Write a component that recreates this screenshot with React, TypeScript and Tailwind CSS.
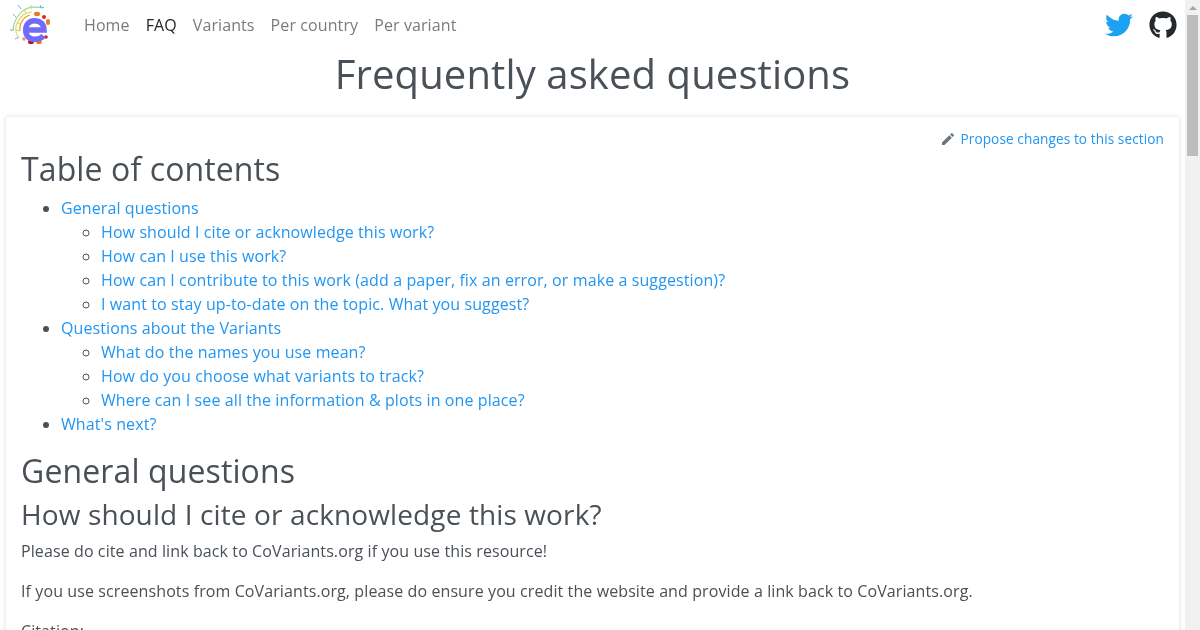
import { FaGithub, FaTwitter } from "react-icons/fa";
import { MdEdit } from "react-icons/md";

const nav = ["Home", "FAQ", "Variants", "Per country", "Per variant"];

const toc: { title: string; items: string[] }[] = [
  {
    title: "General questions",
    items: [
      "How should I cite or acknowledge this work?",
      "How can I use this work?",
      "How can I contribute to this work (add a paper, fix an error, or make a suggestion)?",
      "I want to stay up-to-date on the topic. What you suggest?",
    ],
  },
  {
    title: "Questions about the Variants",
    items: [
      "What do the names you use mean?",
      "How do you choose what variants to track?",
      "Where can I see all the information & plots in one place?",
    ],
  },
  { title: "What's next?", items: [] },
];

function Logo() {
  return (
    <svg width="42" height="42" viewBox="0 0 42 42" fill="none">
      <path d="M4 26 C5 15 12 4 24 3 C28 3 31 3 34 4" stroke="#8ad89a" strokeWidth="1.1" />
      <path d="M9 33 C5 26 7 18 14 11 C17 9 20 8 23 8" stroke="#f2d14a" strokeWidth="1.1" />
      <path d="M11 27 C10 20 14 13 21 11" stroke="#f39a3c" strokeWidth="1.2" />
      <path d="M1 26 h4 M4 10 l3 3 M9 1 l3 4 M32 1 l-1 3 M35 3 l-3 1 M6 35 l4 -2" stroke="#6fa8e6" strokeWidth="1" />
      <path d="M8 18 l3 2 M15 5 l2 4 M22 1 l0 4 M7 26 l4 1" stroke="#b5d96a" strokeWidth="1" />
      <ellipse cx="28" cy="10" rx="3" ry="2.2" fill="#e8791c" />
      <ellipse cx="39" cy="18" rx="2" ry="3" fill="#e8791c" />
      <circle cx="35" cy="13" r="2" fill="#d9252a" />
      <circle cx="37" cy="33" r="1.8" fill="#c9202a" />
      <ellipse cx="30" cy="38" rx="2.8" ry="2" fill="#e8791c" />
      <ellipse cx="22" cy="38" rx="3" ry="2" fill="#b80f1a" />
      <circle cx="15" cy="35" r="1.8" fill="#ef9a66" />
      <path
        d="M17 26 H35 C35 20 31 16.7 25.5 16.7 C20 16.7 16.7 20.5 16.7 26 C16.7 32 20.5 35.3 26 35.3 C29.5 35.3 32.5 34.2 34.5 31.8"
        stroke="#726bf7"
        strokeWidth="5.5"
      />
    </svg>
  );
}

export default function App() {
  return (
    <div className="flex h-[630px] w-[1200px] overflow-hidden bg-white font-['Open_Sans',sans-serif] text-base leading-6 tracking-[0.1px] text-[#495057]">
      <div className="flex h-full w-[1185px] flex-col will-change-transform">
        <nav className="flex h-[50px] shrink-0 items-center pl-[9px] pr-[8px]">
          <Logo />
          <ul className="ml-[33px] flex gap-4">
            {nav.map((n) => (
              <li key={n} className={n === "FAQ" ? "text-[#212529]" : "text-[#7b7b7b]"}>
                {n}
              </li>
            ))}
          </ul>
          <div className="ml-auto flex items-center gap-4 pb-px">
            <FaTwitter className="h-[28px] w-[28px] text-[#1da1f2]" />
            <FaGithub className="h-[28px] w-[28px] text-[#24292e]" />
          </div>
        </nav>
        <h1 className="shrink-0 text-center text-[40px] leading-[48px] tracking-[0.115px]">Frequently asked questions</h1>
        <main className="mx-[5px] mt-[18px] flex-1 rounded-t-[4px] border border-b-0 border-[#f0f0f0] px-[15px] pt-[11px] shadow-[0_0_4px_rgba(0,0,0,0.1)]">
          <div className="flex items-center justify-end text-[13.6px] leading-[22px]">
            <MdEdit className="mr-[4px] h-[16px] w-[16px] text-[#6c757d]" />
            <a className="text-[#2196f3]">Propose changes to this section</a>
          </div>
          <h2 className="text-[32px] leading-[38px] tracking-[0.115px]">Table of contents</h2>
          <ul className="mt-[8px] list-disc pl-10">
            {toc.map((s) => (
              <li key={s.title}>
                <a className="text-[#2196f3]">{s.title}</a>
                {s.items.length > 0 && (
                  <ul className="list-[circle] pl-10">
                    {s.items.map((i) => (
                      <li key={i}>
                        <a className="text-[#2196f3]">{i}</a>
                      </li>
                    ))}
                  </ul>
                )}
              </li>
            ))}
          </ul>
          <h2 className="mt-[16px] text-[32px] leading-[38px] tracking-[0.115px]">General questions</h2>
          <h3 className="mt-[7px] text-[28px] leading-[34px] tracking-[0.115px]">How should I cite or acknowledge this work?</h3>
          <p className="mt-[8px]">Please do cite and link back to CoVariants.org if you use this resource!</p>
          <p className="mt-4">If you use screenshots from CoVariants.org, please do ensure you credit the website and provide a link back to CoVariants.org.</p>
          <p className="mt-4">Citation:</p>
        </main>
      </div>
      <aside className="flex h-full w-[15px] flex-col bg-[#f1f1f1]">
        <div className="flex h-[15px] items-center justify-center">
          <div className="h-0 w-0 border-x-[4px] border-b-[4px] border-x-transparent border-b-[#a3a3a3]" />
        </div>
        <div className="mx-[2px] h-[141px] bg-[#bdbdbd]" />
      </aside>
    </div>
  );
}
